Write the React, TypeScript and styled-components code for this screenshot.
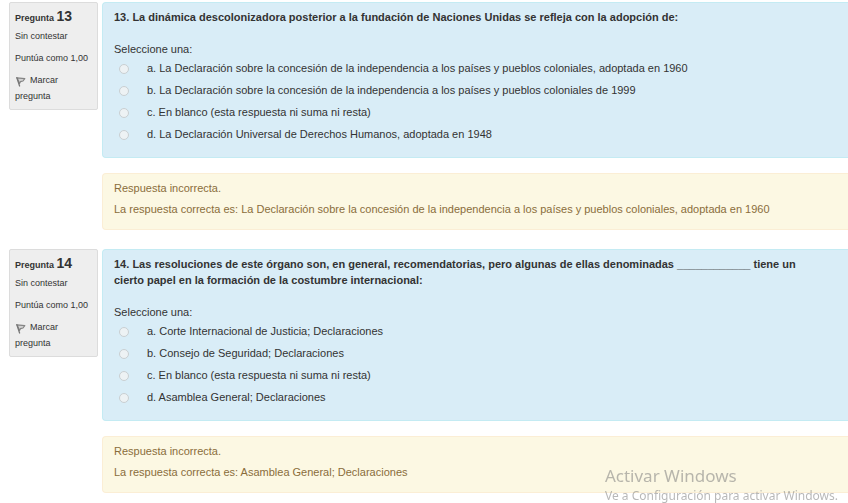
import React from "react";
import styled, { createGlobalStyle } from "styled-components";

const GlobalStyle = createGlobalStyle`
  * { box-sizing: border-box; }
  html, body { margin: 0; background: #fff; }
  body {
    overflow-x: hidden;
    color: #333;
    font-family: "Liberation Sans", Arial, sans-serif;
    font-size: 11px;
    line-height: 16px;
  }
`;

const Page = styled.main`
  display: flex;
  flex-direction: column;
  gap: 19px;
  padding: 2px 0 10px 9px;
`;

const Question = styled.section`
  display: grid;
  grid-template-columns: 89px minmax(0, 1fr);
  column-gap: 4px;
  align-items: start;
`;

const Info = styled.aside`
  padding: 5px;
  border: 1px solid #dcdcdc;
  border-radius: 2px;
  background: #eee;
  font-size: 9px;
`;

const InfoTitle = styled.h2`
  margin: 0 0 2px;
  font-size: 9px;
  line-height: 16px;
`;

const Number = styled.span`
  font-size: 14px;
`;

const InfoLine = styled.p`
  margin: 0 0 6px;
`;

const FlagButton = styled.button`
  display: block;
  width: 100%;
  padding: 0;
  border: 0;
  background: none;
  color: inherit;
  font: inherit;
  text-align: left;
  cursor: pointer;
`;

const FlagIcon = styled.svg`
  width: 12px;
  height: 12px;
  margin-right: 3px;
  vertical-align: -5px;
`;

const Content = styled.div`
  display: flex;
  flex-direction: column;
  gap: 15px;
`;

const Panel = styled.div`
  padding: 6px 24px 12px 11px;
  border: 1px solid;
  border-right: 0;
  border-radius: 4px 0 0 4px;
`;

const Formulation = styled(Panel)`
  border-color: #c4ebf3;
  background: #d9edf7;
`;

const Feedback = styled(Panel)`
  display: flex;
  flex-direction: column;
  gap: 5px;
  border-color: #fbeed5;
  background: #fcf8e3;
  color: #8a6d3b;
`;

const Prompt = styled.h3`
  margin: 0 0 16px;
  font-size: 11px;
  line-height: 16px;
`;

const Answers = styled.fieldset`
  margin: 0;
  padding: 0;
  border: 0;
`;

const Legend = styled.legend`
  padding: 0;
`;

const Answer = styled.label`
  display: flex;
  align-items: center;
  gap: 18px;
  height: 22px;
  padding-left: 5px;
`;

const Radio = styled.input`
  appearance: none;
  flex: none;
  width: 10px;
  height: 10px;
  margin: 2px 0 0;
  border: 1px solid #c9cfd2;
  border-radius: 50%;
  background: #edf2f4;

  &:checked { background: #777; }
`;

const Text = styled.p`
  margin: 0;
`;

const Watermark = styled.div`
  position: fixed;
  right: 10px;
  bottom: -2px;
  color: rgba(125, 125, 125, 0.55);
  font-family: "Noto Sans", "Open Sans", sans-serif;
  font-size: 12px;
  line-height: 18px;
  pointer-events: none;
`;

const WatermarkTitle = styled.div`
  font-size: 17px;
  line-height: 22px;
`;

interface QuestionData {
  number: number;
  prompt: string;
  answers: string[];
  correct: string;
}

const questions: QuestionData[] = [
  {
    number: 13,
    prompt:
      "La dinámica descolonizadora posterior a la fundación de Naciones Unidas se refleja con la adopción de:",
    answers: [
      "a. La Declaración sobre la concesión de la independencia a los países y pueblos coloniales, adoptada en 1960",
      "b. La Declaración sobre la concesión de la independencia a los países y pueblos coloniales de 1999",
      "c. En blanco (esta respuesta ni suma ni resta)",
      "d. La Declaración Universal de Derechos Humanos, adoptada en 1948",
    ],
    correct:
      "La Declaración sobre la concesión de la independencia a los países y pueblos coloniales, adoptada en 1960",
  },
  {
    number: 14,
    prompt:
      "Las resoluciones de este órgano son, en general, recomendatorias, pero algunas de ellas denominadas ____________ tiene un cierto papel en la formación de la costumbre internacional:",
    answers: [
      "a. Corte Internacional de Justicia; Declaraciones",
      "b. Consejo de Seguridad; Declaraciones",
      "c. En blanco (esta respuesta ni suma ni resta)",
      "d. Asamblea General; Declaraciones",
    ],
    correct: "Asamblea General; Declaraciones",
  },
];

function QuestionBlock({ number, prompt, answers, correct }: QuestionData) {
  return (
    <Question>
      <Info>
        <InfoTitle>
          Pregunta <Number>{number}</Number>
        </InfoTitle>
        <InfoLine>Sin contestar</InfoLine>
        <InfoLine>Puntúa como 1,00</InfoLine>
        <FlagButton type="button">
          <FlagIcon viewBox="0 0 12 12" aria-hidden="true">
            <path d="M2 1.8 9.8 2.6 8 5 5.5 5.6 4.5 7.4Z" fill="#d2d2d2" stroke="#858585" strokeWidth="1.2" strokeLinejoin="round" />
            <path d="M1.8 1.6 4.6 10" fill="none" stroke="#777" strokeWidth="1.3" strokeLinecap="round" />
          </FlagIcon>
          Marcar pregunta
        </FlagButton>
      </Info>
      <Content>
        <Formulation>
          <Prompt>
            {number}. {prompt}
          </Prompt>
          <Answers>
            <Legend>Seleccione una:</Legend>
            {answers.map((answer) => (
              <Answer key={answer}>
                <Radio type="radio" name={`question-${number}`} />
                {answer}
              </Answer>
            ))}
          </Answers>
        </Formulation>
        <Feedback>
          <Text>Respuesta incorrecta.</Text>
          <Text>La respuesta correcta es: {correct}</Text>
        </Feedback>
      </Content>
    </Question>
  );
}

export default function App() {
  return (
    <>
      <GlobalStyle />
      <Page>
        {questions.map((question) => (
          <QuestionBlock key={question.number} {...question} />
        ))}
      </Page>
      <Watermark>
        <WatermarkTitle>Activar Windows</WatermarkTitle>
        Ve a Configuración para activar Windows.
      </Watermark>
    </>
  );
}
